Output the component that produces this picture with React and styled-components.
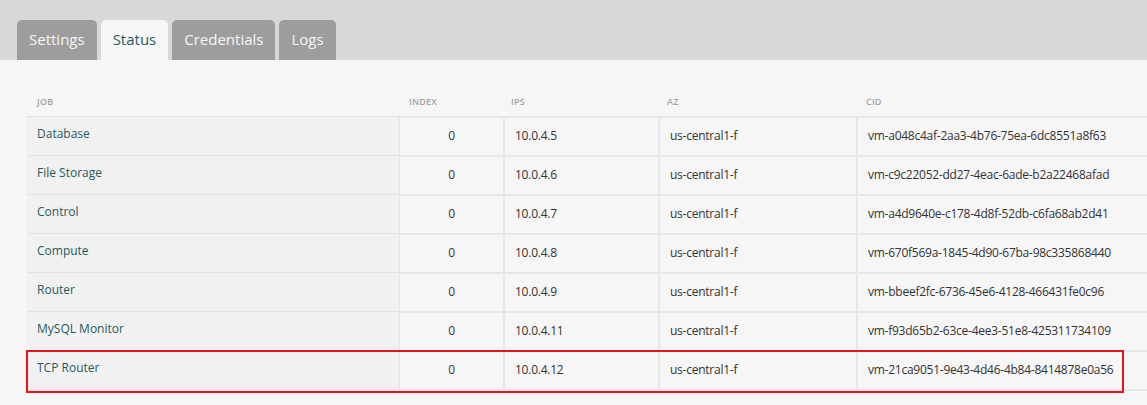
import React from "react";
import styled, { createGlobalStyle } from "styled-components";

const GlobalStyle = createGlobalStyle`
  html, body {
    margin: 0;
    padding: 0;
    background: #f6f6f6;
    font-family: "Open Sans", "Liberation Sans", sans-serif;
  }
`;

const Page = styled.div`
  width: 1147px;
  height: 405px;
  overflow: hidden;
  background: #f6f6f6;
`;

const TabBar = styled.div`
  display: flex;
  gap: 4px;
  align-items: flex-end;
  height: 60px;
  padding-left: 17px;
  background: #d8d8d8;
  box-sizing: border-box;
`;

const Tab = styled.div`
  height: 40px;
  padding: 8px 12px 0;
  box-sizing: border-box;
  border-radius: 5px 5px 0 0;
  font-size: 15px;
  line-height: 22px;
  background: ${(p) => (p.$active ? "#f6f6f6" : "#9d9d9d")};
  color: ${(p) => (p.$active ? "#245e60" : "#f7f7f7")};
`;

const Content = styled.div`
  padding: 28px 0 0 27px;
`;

const cols = "373px 103px 155px 198px 1fr";

const HeadRow = styled.div`
  display: grid;
  grid-template-columns: ${cols};
  height: 28px;
  align-items: center;
`;

const HeadCell = styled.div`
  padding-left: ${(p) => p.$pad || 10}px;
  padding-bottom: 2px;
  font-size: 9px;
  font-weight: 600;
  letter-spacing: 0.2px;
  color: #a3a3a3;
  text-transform: uppercase;
`;

const Row = styled.div`
  position: relative;
  display: grid;
  grid-template-columns: ${cols};
  height: 39px;
`;

const JobCell = styled.div`
  display: flex;
  align-items: center;
  padding: 0 10px 5px;
  background: #f1f1f1;
  border-top: 1px solid #e2e2e2;
  border-right: 1px solid #e4e4e6;
  font-size: 12px;
  color: #1f5b5d;
`;

const Cell = styled.div`
  display: flex;
  align-items: center;
  justify-content: ${(p) => (p.$center ? "center" : "flex-start")};
  padding: 2px 10px 5px;
  border-top: 2px solid #e6e6eb;
  border-left: ${(p) => (p.$first ? "0" : "2px solid #e6e6eb")};
  font-size: 12px;
  letter-spacing: -0.25px;
  color: #333;
  white-space: nowrap;
`;

const Bottom = styled.div`
  height: 2px;
  background: #e6e6eb;
`;

const Highlight = styled.div`
  position: absolute;
  left: -1px;
  top: 0;
  width: 1098px;
  height: 43px;
  box-sizing: border-box;
  border: 2px solid #e8141b;
  pointer-events: none;
`;

const jobs = [
  ["Database", "10.0.4.5", "vm-a048c4af-2aa3-4b76-75ea-6dc8551a8f63"],
  ["File Storage", "10.0.4.6", "vm-c9c22052-dd27-4eac-6ade-b2a22468afad"],
  ["Control", "10.0.4.7", "vm-a4d9640e-c178-4d8f-52db-c6fa68ab2d41"],
  ["Compute", "10.0.4.8", "vm-670f569a-1845-4d90-67ba-98c335868440"],
  ["Router", "10.0.4.9", "vm-bbeef2fc-6736-45e6-4128-466431fe0c96"],
  ["MySQL Monitor", "10.0.4.11", "vm-f93d65b2-63ce-4ee3-51e8-425311734109"],
  ["TCP Router", "10.0.4.12", "vm-21ca9051-9e43-4d46-4b84-8414878e0a56"],
];

const tabs = ["Settings", "Status", "Credentials", "Logs"];

export default function App() {
  return (
    <Page>
      <GlobalStyle />
      <TabBar>
        {tabs.map((t) => (
          <Tab key={t} $active={t === "Status"}>
            {t}
          </Tab>
        ))}
      </TabBar>
      <Content>
        <HeadRow>
          <HeadCell>Job</HeadCell>
          <HeadCell $pad={9}>Index</HeadCell>
          <HeadCell $pad={8}>Ips</HeadCell>
          <HeadCell $pad={9}>Az</HeadCell>
          <HeadCell>Cid</HeadCell>
        </HeadRow>
        {jobs.map(([name, ip, cid], i) => (
          <Row key={name}>
            <JobCell>{name}</JobCell>
            <Cell $center $first>
              0
            </Cell>
            <Cell>{ip}</Cell>
            <Cell>us-central1-f</Cell>
            <Cell>{cid}</Cell>
            {i === jobs.length - 1 && <Highlight />}
          </Row>
        ))}
        <Bottom />
      </Content>
    </Page>
  );
}
